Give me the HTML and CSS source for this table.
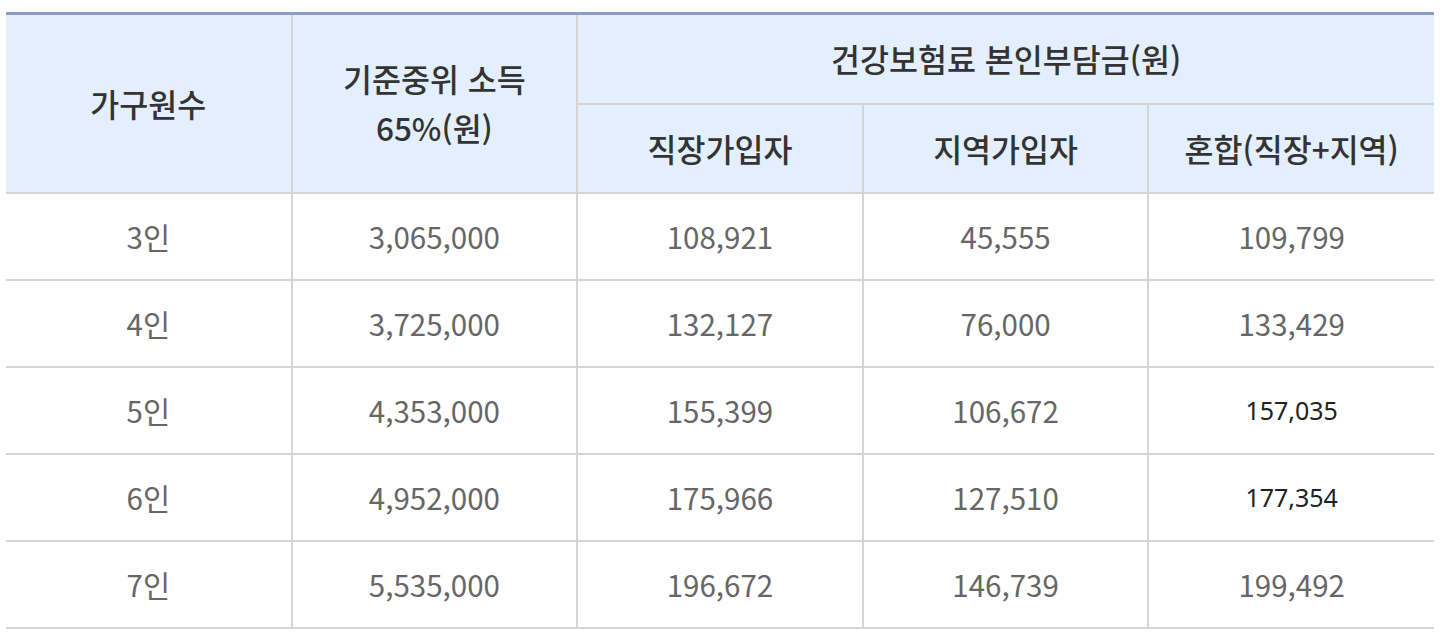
FILE: index.html
```html
<!DOCTYPE html>
<html lang="ko">
<head>
<meta charset="utf-8">
<link rel="stylesheet" href="styles.css">
</head>
<body>
<div class="wrap">
<table class="tbl">
  <thead>
    <tr class="h1">
      <th rowspan="2">가구원수</th>
      <th rowspan="2">기준중위 소득<br>65%(원)</th>
      <th colspan="3">건강보험료 본인부담금(원)</th>
    </tr>
    <tr class="h2">
      <th>직장가입자</th>
      <th>지역가입자</th>
      <th>혼합(직장+지역)</th>
    </tr>
  </thead>
  <tbody>
    <tr><td>3인</td><td>3,065,000</td><td>108,921</td><td>45,555</td><td>109,799</td></tr>
    <tr><td>4인</td><td>3,725,000</td><td>132,127</td><td>76,000</td><td>133,429</td></tr>
    <tr><td>5인</td><td>4,353,000</td><td>155,399</td><td>106,672</td><td class="alt">157,035</td></tr>
    <tr><td>6인</td><td>4,952,000</td><td>175,966</td><td>127,510</td><td class="alt">177,354</td></tr>
    <tr><td>7인</td><td>5,535,000</td><td>196,672</td><td>146,739</td><td>199,492</td></tr>
  </tbody>
</table>
</div>
</body>
</html>
```

FILE: styles.css
```css
html, body {
  margin: 0;
  padding: 0;
  background: #fff;
}
.wrap {
  padding: 12px 16px 0 6px;
}
.tbl {
  width: 1428px;
  border-collapse: collapse;
  table-layout: fixed;
  border-top: 3px solid #8b9bcb;
  font-family: "Noto Sans CJK KR", "Noto Sans", sans-serif;
  font-size: 29.5px;
}
.tbl th, .tbl td {
  border: 2px solid #d5d5d5;
  text-align: center;
  vertical-align: middle;
  padding: 0;
}
.tbl tr > :first-child { border-left: none; }
.tbl tr > :last-child { border-right: none; }
.tbl th {
  background: #e3effc;
  color: #333;
  font-weight: 500;
  font-size: 31.5px;
  line-height: 1.55;
}
.tbl .h1 th { border-top: none; }
.tbl .h1 { height: 90px; }
.tbl .h2 { height: 89px; }
.tbl td {
  color: #666;
  font-weight: 400;
  height: 85px;
}
.tbl td.alt {
  color: #222;
  font-family: "Noto Sans", sans-serif;
  font-size: 25px;
}
```
